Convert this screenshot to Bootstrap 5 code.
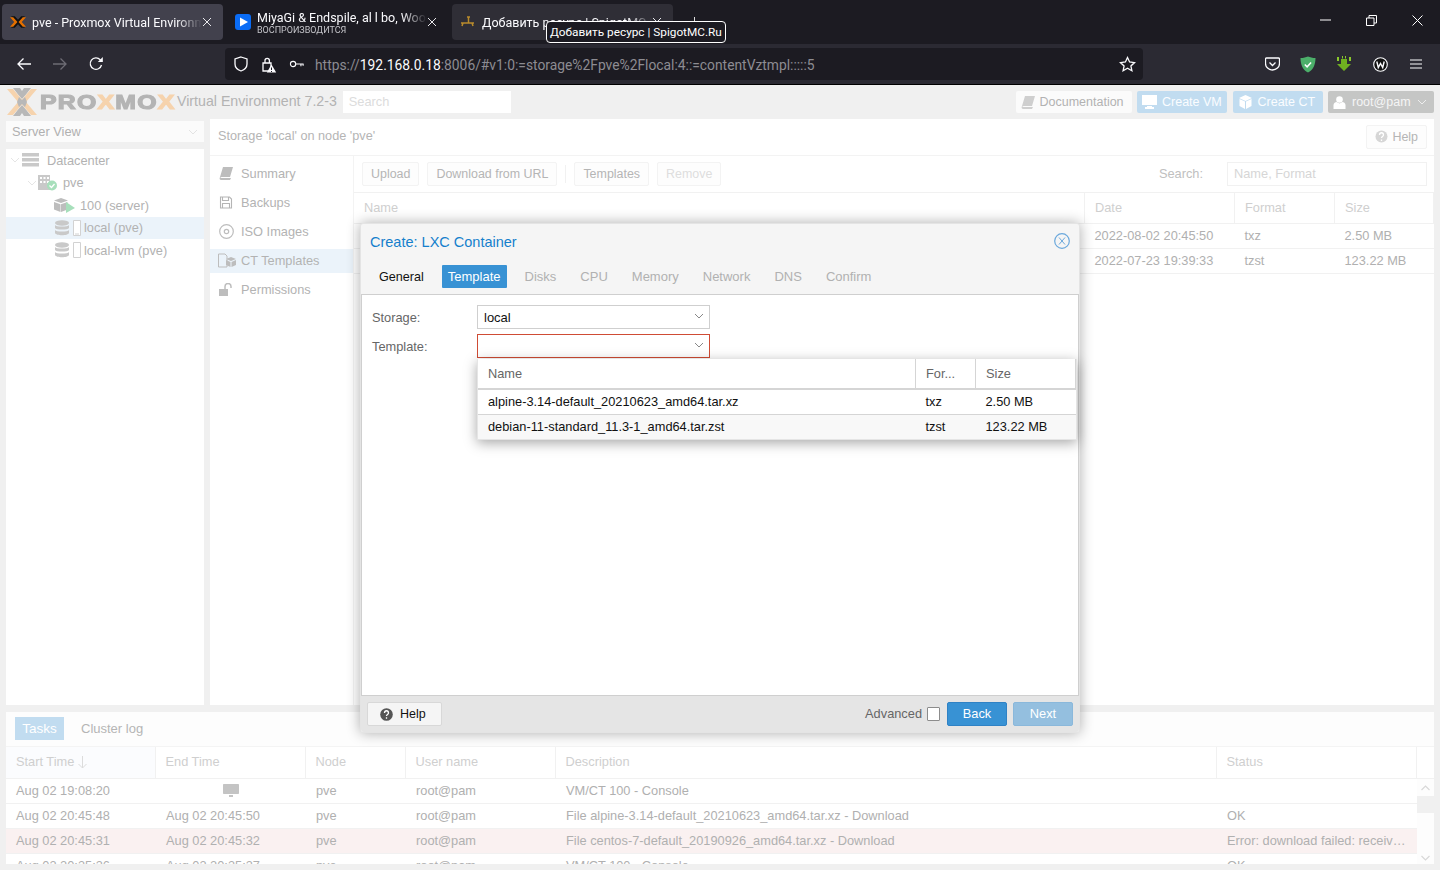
<!DOCTYPE html>
<html lang="en">
<head>
<meta charset="utf-8">
<title>pve - Proxmox Virtual Environment</title>
<link rel="stylesheet" href="https://cdn.jsdelivr.net/npm/bootstrap@5.3.0/dist/css/bootstrap.min.css">
<style>
html,body{height:870px;overflow:hidden}
body{font:12.8px/1.2 "Liberation Sans",Arial,sans-serif;color:#a9a9a9;background:#f0f0f0;position:relative}
svg{display:block;flex:none}
.chrome-ui{font-family:Roboto,"Noto Sans",sans-serif;color:#fbfbfe}
.tabstrip{height:44px;background:#1c1b22;padding:4px 0 4px 2px}
.btab{width:221px;height:36px;border-radius:4px;padding:0 11px 0 8px;font-size:12.5px;white-space:nowrap;flex:none}
.btab.cur{background:#42414d}
.btab.third{background:#2f2e36;margin-left:8px}
.btab.second{padding:0 7px 0 12px}
.ttl{flex:1;min-width:0;overflow:hidden;margin-left:6px;-webkit-mask-image:linear-gradient(90deg,#000 85%,transparent);mask-image:linear-gradient(90deg,#000 85%,transparent)}
.ttl small{display:block;font-size:9px;line-height:10px;color:#c5c5ca}
.ttl span{display:block;line-height:15px}
.winbtns{margin-left:auto}
.winbtn{width:46px;height:32px;display:flex;align-items:center;justify-content:center}
.tipbox{position:absolute;left:546px;top:21px;width:180px;height:22px;background:#1c1b22;border:1px solid #fff;border-radius:4px;font-size:11.8px;color:#fff;line-height:21px;padding-left:3px;white-space:nowrap;z-index:5}
.caretmark{position:absolute;left:694px;top:17px;width:1px;height:5px;background:#ddd}
.toolbar-b{height:41px;background:#2b2a33;border-bottom:1px solid #000;padding:4px 0}
.navrow{height:32px;padding-left:6px}
.navic{width:36px;display:flex;justify-content:center}
.urlbar{width:918px;height:32px;background:#1c1b22;border-radius:4px;margin-left:111px;padding:0 7px 0 8px;font-size:13.83px;color:#8d8c92;white-space:nowrap}
.urlbar span{padding-top:2px}
.urlbar b{font-weight:400;color:#fbfbfe}
.urlgap1{margin-left:11px}
.urlgap2{margin-left:12px;margin-right:10px}
.addons{margin-left:auto;padding-right:6px;height:32px}
.addons>div{width:36px;display:flex;justify-content:center}
.topbar{height:34px;padding:6px 6px 6px 7px;background:#f0f0f0}
.logo-word{font-weight:700;font-size:20px;letter-spacing:1px;color:#b4b4b4;-webkit-text-stroke:1.2px #b4b4b4;margin-left:3px;line-height:1;white-space:nowrap;transform:scaleX(1.24);transform-origin:left center;width:135px}
.logo-word i{font-style:normal;color:#f6d3ad;-webkit-text-stroke:1.2px #f6d3ad}
.verlabel{font-size:14.2px;color:#b3b3b3;margin-left:2px;white-space:nowrap}
.searchtop{width:168px;height:22px;background:#fff;margin-left:6px;color:#dcdcdc;padding:0 6px;line-height:22px}
.pvbtn{height:22px;padding:0 0 0 5px;border:0;border-radius:2px;font-size:12.5px;line-height:22px;display:flex;align-items:center;white-space:nowrap;margin-left:5.500px}
.pvbtn.light{background:#fbfbfb;color:#b2b2b2;width:116px;gap:5px}
.pvbtn.blue{background:#c1dcf0;color:#fbfdff;width:90px;gap:5px}
.pvbtn.grey{background:#c5c6c5;color:#f5f5f5;width:106px;gap:6px}
.workrow{height:586px;gap:6px;padding:0 6px}
.leftcol{width:198px;flex:none;gap:7px;padding-top:2px}
.viewsel{height:21px;background:#fbfbfb;padding:0 6px;color:#b0b0b0}
.treebox{flex:1;background:#fff}
.trow{height:22.5px;white-space:nowrap;color:#b2b2b2}
.trow.on{background:#ebf3fa}
.mainpan{width:1224px;flex:none;background:#fff}
.crumb{height:37px;border-bottom:1px solid #f3f3f3;padding:0 7px 0 8px;color:#b5b5b5;font-size:12.7px}
.sidemenu{width:144px;flex:none;border-right:1px solid #f3f3f3;padding-top:3px}
.mitem{height:29px;padding-left:9px;gap:8px;color:#b3b3b3;white-space:nowrap}
.mitem.gapb{gap:7px}
.mitem.on{background:#ebf3fa;height:24px;margin:2.5px 0;gap:4px;padding-left:8px}
.stbar{height:37px;border-bottom:1px solid #f1f1f1;padding:0 7px 0 8px}
.ghostbtn{height:24px;padding:0 8px;border:1px solid #f3f3f3;border-radius:2px;background:#fdfdfd;color:#b5b5b5;line-height:22px;margin-right:8px;white-space:nowrap;font-size:12.45px}
.ghostbtn.off{color:#dedede}
.vsep{width:1px;height:18px;background:#f1f1f1;margin-right:8px}
.findlabel{margin-left:auto;color:#c0c0c0;margin-right:24px}
.findbox{width:200px;height:24px;border:1px solid #f1f1f1;padding-left:6px;line-height:22px;color:#d6d6d6}
.gridt.table{table-layout:fixed;margin:0;width:100%;--bs-table-bg:transparent;--bs-table-color:inherit;font-size:12.8px}
.gridt.table>:not(caption)>*>*{padding:0 10px;border-bottom:1px solid #f1f1f1;box-shadow:none;white-space:nowrap;overflow:hidden;text-overflow:ellipsis;vertical-align:middle;font-weight:400}
.gridt th{height:30px;color:#cfcfcf;border-right:1px solid #f1f1f1}
.gridt td{height:25px;color:#b0b0b0}
.gridt.table>tbody>tr.bad>td{background:#faf1f1}
.btmpan{height:152px;margin:7px 6px 0;background:#fff;overflow:hidden}
.btmtabs{height:35px;padding:5px 9px 6px;background:#fdfdfd;border-bottom:1px solid #f4f4f4}
.tasktab{height:23px;width:49px;background:#c1dcf0;color:#fff;text-align:center;line-height:24px;font-size:13.5px}
.clog{margin-left:17px;padding-top:1px;color:#b5b5b5;font-size:13px}
.btmhead.gridt.table{width:1428px}
.btmhead.gridt.table>:not(caption)>*>*{height:31px;padding-bottom:2px}
.btmhead th.sorted{background:#fbfcfe}
.taskgrid.gridt.table{width:1411px}
.taskscroll{height:88px;overflow:hidden;position:relative}
.scrollrail{position:absolute;right:0;top:0;bottom:0;width:17px;background:#fdfdfd}
.scrollrail i{position:absolute;left:0;right:0;top:17px;height:17px;background:#f0f0f0}
.scrollrail svg{position:absolute;left:4px}
.scrollrail svg.upa{top:6px}
.scrollrail svg.dna{top:76px}
.wiz{position:absolute;left:360px;top:223px;width:720px;height:510px;background:#f5f5f5;border:1px solid #e4e4e4;border-radius:3px;box-shadow:0 0 14px rgba(0,0,0,.32);z-index:3;display:flex;flex-direction:column}
.wizhead{height:36px;padding:2px 9px 0;color:#157fcc;font-size:14.5px;flex:none}
.wizhead svg{margin-top:-4px}
.wiztabs{height:34px;padding:5px 6px 6px;flex:none;align-items:stretch}
.wtab{padding:0 6px;margin:0 6px;color:#b1b1b1;font-size:13px;line-height:24px;white-space:nowrap;border-radius:1px}
.wtab.k{color:#111;font-size:12.6px}
.wtab.cur{background:#3892d4;color:#fff}
.wizbody{height:402px;flex:none;background:#fff;border:1px solid #cfcfcf;padding:10px;position:relative}
.frow{height:24px;margin-bottom:5px;color:#666}
.frow label{width:105px;flex:none;font-size:12.8px;color:#666;padding-top:1px}
.combo{width:233px;height:24px;border:1px solid #cfcfcf;padding:0 6px;color:#111;font-size:13px;line-height:23px;position:relative}
.combo.bad{border-color:#cf4c35}
.combo svg{position:absolute;right:5px;top:7px}
.pickl{position:absolute;left:115px;top:64px;width:600px;height:81px;background:#fff;box-shadow:0 3px 12px rgba(0,0,0,.35);z-index:4;border:1px solid #e5e5e5;border-top:0}
.pickl .gridt th{color:#666;border-right:1px solid #d5d5d5;font-size:12.8px;border-bottom:2px solid #d5d5d5!important;height:30px}
.pickl .gridt td{color:#111;font-size:12.8px;border-bottom:1px solid #d5d5d5!important}
.pickl .gridt tr.alt td{background:#f8f8f8;border-bottom:0!important}
.wizfoot{flex:1;background:#e5e5e5;padding:0 6px;border-radius:0 0 3px 3px}
.fhelp{width:75px;height:24px;background:#f5f5f5;border:1px solid #d8d8d8;border-radius:2px;color:#111;font-size:12.5px;padding:0 0 0 12px;gap:7px}
.advl{margin-left:auto;color:#666;font-size:12.8px}
.advc{width:13px;height:14px;border:1px solid #8c8c8c;background:#fff;border-radius:1px;margin:0 7px 0 5px}
.fbtn{width:60px;height:24px;border:1px solid #2f82c5;border-radius:2px;background:#3892d4;color:#fff;text-align:center;line-height:22px;font-size:12.8px}
.fbtn.dim{background:#94bfdf;border-color:#8ab8db;margin-left:6px}
.helpup{margin-top:-1px}
.ind21{padding-left:21px}.ind48{padding-left:48px}.ind49{padding-left:49px}
.ml2px{margin-left:2px}.ml3px{margin-left:3px}.ml5px{margin-left:5px}.ml8px{margin-left:8px}
.w150{width:150px}.w149{width:149px}.w100{width:100px}.w99{width:99px}.w661{width:661px}.w200{width:200px}.w18{width:18px}.w60{width:60px}
</style>
</head>
<body>

<div class="chrome-ui">
  <div class="tabstrip d-flex align-items-stretch">
    <div class="btab cur d-flex align-items-center">
      <svg width="16" height="14" viewBox="0 0 30 24"><path d="M2 1h7l6 7 6-7h7L18.500 12 28 23h-7l-6-7-6 7H2l9.500-11z" fill="#111"/><path d="M0 3h6l8 9-8 9H0l8-9zM30 3h-6l-8 9 8 9h6l-8-9z" fill="#e57000"/></svg>
      <div class="ttl"><span>pve - Proxmox Virtual Environment</span></div>
      <svg width="10" height="10" viewBox="0 0 10 10"><path d="M1 1l8 8M9 1l-8 8" stroke="#e8e8ec" stroke-width="1"/></svg>
    </div>
    <div class="btab second d-flex align-items-center">
      <svg width="16" height="16" viewBox="0 0 16 16"><rect width="16" height="16" rx="3" fill="#0a6cf5"/><path d="M5 3.500l8 4.500-8 4.500z" fill="#fff"/></svg>
      <div class="ttl"><span>MiyaGi &amp; Endspile, al l bo, Woosh</span><small>ВОСПРОИЗВОДИТСЯ</small></div>
      <svg width="10" height="10" viewBox="0 0 10 10"><path d="M1 1l8 8M9 1l-8 8" stroke="#e8e8ec" stroke-width="1"/></svg>
    </div>
    <div class="btab third d-flex align-items-center">
      <svg width="16" height="16" viewBox="0 0 16 16"><path d="M1 9h13M7 3h3M8.500 3v6M3 9l-1 3M12 9l1 3" stroke="#b98b2c" stroke-width="1.500" fill="none"/></svg>
      <div class="ttl"><span>Добавить ресурс | SpigotMC.Ru</span></div>
      <svg width="10" height="10" viewBox="0 0 10 10"><path d="M1 1l8 8M9 1l-8 8" stroke="#e8e8ec" stroke-width="1"/></svg>
    </div>
    <div class="winbtns d-flex">
      <div class="winbtn"><svg width="11" height="2" viewBox="0 0 11 2"><path d="M0 1h11" stroke="#fff"/></svg></div>
      <div class="winbtn"><svg width="11" height="11" viewBox="0 0 11 11"><path d="M.5 3h7.500v7.500H.5zM3 3V.5h7.500V8H8" fill="none" stroke="#fff"/></svg></div>
      <div class="winbtn"><svg width="11" height="11" viewBox="0 0 11 11"><path d="M.5.500l10 10M10.500.500l-10 10" stroke="#fff"/></svg></div>
    </div>
  </div>
  <div class="caretmark"></div>
  <div class="tipbox">Добавить ресурс | SpigotMC.Ru</div>
  <div class="toolbar-b d-flex align-items-start">
    <div class="d-flex align-items-center navrow">
      <div class="navic"><svg width="16" height="16" viewBox="0 0 16 16"><path d="M15 8H2M7.500 2.500L2 8l5.500 5.500" fill="none" stroke="#fbfbfe" stroke-width="1.300"/></svg></div>
      <div class="navic"><svg width="16" height="16" viewBox="0 0 16 16"><path d="M1 8h13M8.500 2.500L14 8l-5.500 5.500" fill="none" stroke="#6d6c74" stroke-width="1.300"/></svg></div>
      <div class="navic"><svg width="16" height="16" viewBox="0 0 16 16"><path d="M13.500 9a5.700 5.700 0 1 1-1.300-5.200L14 5.500" fill="none" stroke="#fbfbfe" stroke-width="1.300"/><path d="M14.800 1v5h-5z" fill="#fbfbfe"/></svg></div>
    </div>
    <div class="urlbar d-flex align-items-center">
      <svg width="16" height="16" viewBox="0 0 16 16"><path d="M8 1l6 2v5c0 3.500-2.500 5.800-6 7-3.500-1.200-6-3.500-6-7V3z" fill="none" stroke="#fbfbfe" stroke-width="1.300"/></svg>
      <svg class="urlgap1" width="17" height="17" viewBox="0 0 17 17"><path d="M3 7h8v8H3zM5 7V4.500a2.200 2.200 0 0 1 4.400 0V7" fill="none" stroke="#fbfbfe" stroke-width="1.300"/><path d="M11.500 8.500l4.700 8h-9.400z" fill="#fbfbfe"/><path d="M11.500 11.500v2.500M11.500 15v1" stroke="#1c1b22"/></svg>
      <svg class="urlgap2" width="16" height="14" viewBox="0 0 17 16"><circle cx="4" cy="8" r="3" fill="none" stroke="#fbfbfe" stroke-width="1.300"/><path d="M7 8h9M13 8v2.500M15.500 8v2" stroke="#fbfbfe" stroke-width="1.300"/></svg>
      <span>https://<b>192.168.0.18</b>:8006/#v1:0:=storage%2Fpve%2Flocal:4::=contentVztmpl:::::5</span>
      <svg class="ms-auto" width="17" height="17" viewBox="0 0 17 17"><path d="M8.500 1.500l2.100 4.500 4.900.6-3.600 3.300 1 4.800-4.400-2.500-4.400 2.500 1-4.800L1.500 6.600l4.900-.6z" fill="none" stroke="#fbfbfe" stroke-width="1.300"/></svg>
    </div>
    <div class="addons d-flex align-items-center">
      <div><svg width="15" height="14" viewBox="0 0 15 14"><path d="M1.500 1h12c.5 0 1 .4 1 1v4.500c0 3.600-3.200 6.500-7 6.500s-7-2.900-7-6.500V2c0-.6.500-1 1-1z" fill="none" stroke="#fbfbfe" stroke-width="1.300"/><path d="M4.500 5.500l3 3 3-3" fill="none" stroke="#fbfbfe" stroke-width="1.300"/></svg></div>
      <div><svg width="16" height="17" viewBox="0 0 16 17"><path d="M8 .500c2 .8 4.500 1.500 7.500 1.500 0 7-2.500 12-7.500 14.500C3 14 .5 9 .5 2 3.500 2 6 1.300 8 .500z" fill="#4caf6a"/><path d="M4.800 8.500l2.300 2.300 4-4.300" fill="none" stroke="#fff" stroke-width="1.500"/></svg></div>
      <div><svg width="16" height="16" viewBox="0 0 16 16"><path d="M5 3h6v5h4l-7 7-7-7h4z" fill="#70b020"/><path d="M6 0h1v2.500H6zM9 0h1v2.500H9zM1 1h2v4H1zM13 1h2v4h-2z" fill="#8ac82c"/></svg></div>
      <div><svg width="15" height="15" viewBox="0 0 15 15"><circle cx="7.500" cy="7.500" r="6.800" fill="#111" stroke="#fbfbfe" stroke-width="1.100"/><path d="M3.800 4.500l1.500 6 2.200-4 2.200 4 1.500-6" fill="none" stroke="#fbfbfe" stroke-width="1.400"/></svg></div>
      <div><svg width="12" height="10" viewBox="0 0 12 10"><path d="M0 1h12M0 5h12M0 9h12" stroke="#fbfbfe" stroke-width="1.200"/></svg></div>
    </div>
  </div>
</div>

<div class="topbar d-flex align-items-center">
  <svg width="30" height="28" viewBox="0 0 30 28"><path d="M6 0h7l2 3 2-3h7l-5.500 7L15 11l-3.500-4zM6 28h7l2-3 2 3h7l-5.500-7L15 17l-3.500 4z" fill="#b8b8b8"/><path d="M0 1h6l11 13L6 27H0l11-13zM30 1h-6L13 14l11 13h6L19 14z" fill="#f6d3ad"/><path d="M12 9l3 3 3-3 2 5-2 5-3-3-3 3-2-5z" fill="#b8b8b8"/></svg>
  <div class="logo-word">PRO<i>X</i>MO<i>X</i></div>
  <div class="verlabel">Virtual Environment 7.2-3</div>
  <div class="searchtop">Search</div>
  <div class="ms-auto d-flex">
    <div class="pvbtn light"><svg width="14" height="13" viewBox="0 0 14 13"><path d="M4 0h10l-3 10H1zM1 10c-1 2 0 3 1 3h9l1-2H2.500" fill="#cfcfcf"/></svg>Documentation</div>
    <div class="pvbtn blue"><svg width="15" height="14" viewBox="0 0 15 14"><path d="M0 0h15v10H0zM5 11h5v1h2v2H3v-2h2z" fill="#fff"/></svg>Create VM</div>
    <div class="pvbtn blue"><svg width="15" height="14" viewBox="0 0 14 14"><path d="M7 0l6.500 3L7 6 .5 3zM1 4l5.500 2.500V14L1 11zM13 4v7l-5.500 3V6.500z" fill="#fff"/></svg>Create CT</div>
    <div class="pvbtn grey"><svg width="13" height="13" viewBox="0 0 12 13"><circle cx="6" cy="3.500" r="3.300" fill="#fff"/><path d="M0 13V9c0-2 2-3 3-3l3 1.500L9 6c1 0 3 1 3 3v4z" fill="#fff"/></svg>root@pam<svg width="10" height="6" viewBox="0 0 10 6"><path d="M1 1l4 4 4-4" fill="none" stroke="#eee"/></svg></div>
  </div>
</div>

<div class="workrow d-flex">
  <div class="leftcol d-flex flex-column">
    <div class="viewsel d-flex align-items-center justify-content-between">Server View<svg width="10" height="6" viewBox="0 0 10 6"><path d="M1 1l4 4 4-4" fill="none" stroke="#e3e3e3"/></svg></div>
    <div class="treebox">
      <div class="trow d-flex align-items-center ps-1">
        <svg width="10" height="6" viewBox="0 0 10 6"><path d="M1 1l4 4 4-4" fill="none" stroke="#e5e5e5"/></svg>
        <svg class="ml2px" width="17" height="14" viewBox="0 0 17 14"><path d="M0 0h17v3.500H0zM0 5h17v3.500H0zM0 10h17v3.500H0z" fill="#c9c9c9"/></svg>
        <span class="ml8px">Datacenter</span>
      </div>
      <div class="trow d-flex align-items-center ind21">
        <svg width="10" height="6" viewBox="0 0 10 6"><path d="M1 1l4 4 4-4" fill="none" stroke="#e5e5e5"/></svg>
        <svg width="21" height="17" viewBox="0 0 21 17"><path d="M1 1h12v15H1z" fill="#c9c9c9"/><path d="M3 3h2v2H3zM6.500 3h2v2h-2zM10 3h2v2h-2zM3 7h2v2H3zM6.500 7h2v2h-2zM10 7h2v2h-2z" fill="#fff"/><circle cx="15" cy="11.500" r="5" fill="#a7dfbb"/><path d="M12.500 11.500l2 2 3-3.500" fill="none" stroke="#fff" stroke-width="1.300"/></svg>
        <span class="ml5px">pve</span>
      </div>
      <div class="trow d-flex align-items-center ind48">
        <svg width="21" height="16" viewBox="0 0 21 16"><path d="M7 1l7 2.500L7 6 0 3.500zM0 5l6.500 2.300V15L0 12.500zM13.500 5v7.500L7 15V7.300z" fill="#bdbdbd"/><path d="M12 5l9 6-9 5z" fill="#a7dfbb"/></svg>
        <span class="ml5px">100 (server)</span>
      </div>
      <div class="trow on d-flex align-items-center ind49">
        <svg width="14" height="16" viewBox="0 0 14 16"><ellipse cx="7" cy="3" rx="7" ry="2.700" fill="#c9c9c9"/><path d="M0 5c1 2 13 2 14 0v3c-1 2-13 2-14 0zM0 10c1 2 13 2 14 0v3c-1 3-13 3-14 0z" fill="#c9c9c9"/></svg>
        <svg class="ms-1" width="8" height="16" viewBox="0 0 8 16"><path d="M.5.500h7v15h-7z" fill="#fff" stroke="#d2d2d2"/><path d="M2 14h4" stroke="#d2d2d2"/></svg>
        <span class="ml3px">local (pve)</span>
      </div>
      <div class="trow d-flex align-items-center ind49">
        <svg width="14" height="16" viewBox="0 0 14 16"><ellipse cx="7" cy="3" rx="7" ry="2.700" fill="#c9c9c9"/><path d="M0 5c1 2 13 2 14 0v3c-1 2-13 2-14 0zM0 10c1 2 13 2 14 0v3c-1 3-13 3-14 0z" fill="#c9c9c9"/></svg>
        <svg class="ms-1" width="8" height="16" viewBox="0 0 8 16"><path d="M.5.500h7v15h-7z" fill="#fff" stroke="#d2d2d2"/></svg>
        <span class="ml3px">local-lvm (pve)</span>
      </div>
    </div>
  </div>

  <div class="mainpan d-flex flex-column">
    <div class="crumb d-flex align-items-center">Storage 'local' on node 'pve'
      <div class="ghostbtn helpup ms-auto me-0 d-flex align-items-center gap-1"><svg width="13" height="13" viewBox="0 0 13 13"><circle cx="6.500" cy="6.500" r="6" fill="#d6d6d6"/><path d="M4.500 5c0-3 4-3 4 0 0 1.500-2 1.500-2 3M6.500 9.500v1.500" fill="none" stroke="#fff" stroke-width="1.300"/></svg>Help</div>
    </div>
    <div class="d-flex flex-fill">
      <div class="sidemenu">
        <div class="mitem d-flex align-items-center"><svg width="14" height="13" viewBox="0 0 14 13"><path d="M4 0h10l-3 10H1zM1 10c-1 2 0 3 1 3h9l1-2H2.500" fill="#bdbdbd"/></svg>Summary</div>
        <div class="mitem d-flex align-items-center"><svg width="14" height="13" viewBox="0 0 13 13"><path d="M1 1h9l2 2v9H1zM3 1.500v3h6v-3M3 12V7.500h7V12" fill="none" stroke="#b5b5b5" stroke-width="1.100"/></svg>Backups</div>
        <div class="mitem gapb d-flex align-items-center"><svg width="15" height="15" viewBox="0 0 15 15"><circle cx="7.500" cy="7.500" r="6.800" fill="none" stroke="#bdbdbd" stroke-width="1.200"/><circle cx="7.500" cy="7.500" r="2.200" fill="none" stroke="#bdbdbd" stroke-width="1.200"/></svg>ISO Images</div>
        <div class="mitem on d-flex align-items-center"><svg width="19" height="15" viewBox="0 0 19 15"><path d="M.5 1H7l2 2v11H.5z" fill="none" stroke="#bdbdbd"/><path d="M13 4l5 2-5 2-5-2zM8 7l4.500 2v5L8 12zM18 7v5l-4.500 2V9z" fill="#bdbdbd"/></svg><span>CT Templates</span></div>
        <div class="mitem d-flex align-items-center"><svg width="14" height="13" viewBox="0 0 14 13"><path d="M0 6h9v7H0z" fill="#bdbdbd"/><path d="M6 6V3.500a3 3 0 0 1 6 0V5" fill="none" stroke="#bdbdbd" stroke-width="1.500"/></svg>Permissions</div>
      </div>
      <div class="flex-fill">
        <div class="stbar d-flex align-items-center">
          <div class="ghostbtn">Upload</div>
          <div class="ghostbtn">Download from URL</div>
          <div class="vsep"></div>
          <div class="ghostbtn">Templates</div>
          <div class="ghostbtn off">Remove</div>
          <div class="findlabel">Search:</div>
          <div class="findbox">Name, Format</div>
        </div>
        <table class="table gridt">
          <colgroup><col><col class="w150"><col class="w100"><col class="w99"></colgroup>
          <thead><tr><th>Name</th><th>Date</th><th>Format</th><th>Size</th></tr></thead>
          <tbody>
            <tr><td></td><td>2022-08-02 20:45:50</td><td>txz</td><td>2.50 MB</td></tr>
            <tr><td></td><td>2022-07-23 19:39:33</td><td>tzst</td><td>123.22 MB</td></tr>
          </tbody>
        </table>
      </div>
    </div>
  </div>
</div>

<div class="btmpan">
  <div class="btmtabs d-flex align-items-center"><div class="tasktab">Tasks</div><div class="clog">Cluster log</div></div>
  <table class="table gridt btmhead">
    <colgroup><col class="w149"><col class="w150"><col class="w100"><col class="w150"><col class="w661"><col class="w200"><col class="w18"></colgroup>
    <thead><tr><th class="sorted">Start Time <svg class="d-inline-block" width="9" height="13" viewBox="0 0 9 13"><path d="M4.500 0v12M.5 8l4 4 4-4" fill="none" stroke="#dcdcdc"/></svg></th><th>End Time</th><th>Node</th><th>User name</th><th>Description</th><th>Status</th><th></th></tr></thead>
  </table>
  <div class="taskscroll">
    <table class="table gridt taskgrid">
      <colgroup><col class="w150"><col class="w150"><col class="w100"><col class="w150"><col class="w661"><col class="w200"></colgroup>
      <tbody>
        <tr><td>Aug 02 19:08:20</td><td><svg class="mx-auto" width="16" height="14" viewBox="0 0 16 14"><path d="M1 0h14c.6 0 1 .4 1 1v8c0 .6-.4 1-1 1H1c-.6 0-1-.4-1-1V1c0-.6.4-1 1-1zM6 11h4v2H6z" fill="#c4c4c4"/></svg></td><td>pve</td><td>root@pam</td><td>VM/CT 100 - Console</td><td></td></tr>
        <tr><td>Aug 02 20:45:48</td><td>Aug 02 20:45:50</td><td>pve</td><td>root@pam</td><td>File alpine-3.14-default_20210623_amd64.tar.xz - Download</td><td>OK</td></tr>
        <tr class="bad"><td>Aug 02 20:45:31</td><td>Aug 02 20:45:32</td><td>pve</td><td>root@pam</td><td>File centos-7-default_20190926_amd64.tar.xz - Download</td><td>Error: download failed: received bad status</td></tr>
        <tr><td>Aug 02 20:35:36</td><td>Aug 02 20:35:37</td><td>pve</td><td>root@pam</td><td>VM/CT 100 - Console</td><td>OK</td></tr>
      </tbody>
    </table>
    <div class="scrollrail"><svg class="upa" width="9" height="6" viewBox="0 0 9 6"><path d="M.5 5l4-4 4 4" fill="none" stroke="#d8d8d8" stroke-width="1.200"/></svg><i></i><svg class="dna" width="9" height="6" viewBox="0 0 9 6"><path d="M.5 1l4 4 4-4" fill="none" stroke="#d8d8d8" stroke-width="1.200"/></svg></div>
  </div>
</div>

<div class="wiz">
  <div class="wizhead d-flex align-items-center">Create: LXC Container
    <svg class="ms-auto" width="16" height="16" viewBox="0 0 16 16"><circle cx="8" cy="8" r="7.300" fill="none" stroke="#6aa8dc" stroke-width="1.200"/><path d="M5 4.500l6 7M11 4.500l-6 7" stroke="#6aa8dc"/></svg>
  </div>
  <div class="wiztabs d-flex">
    <div class="wtab k">General</div><div class="wtab cur">Template</div><div class="wtab">Disks</div><div class="wtab">CPU</div><div class="wtab">Memory</div><div class="wtab">Network</div><div class="wtab">DNS</div><div class="wtab">Confirm</div>
  </div>
  <div class="wizbody">
    <div class="frow d-flex align-items-center"><label>Storage:</label><div class="combo">local<svg width="10" height="6" viewBox="0 0 10 6"><path d="M1 1l4 4 4-4" fill="none" stroke="#888"/></svg></div></div>
    <div class="frow d-flex align-items-center"><label>Template:</label><div class="combo bad"><svg width="10" height="6" viewBox="0 0 10 6"><path d="M1 1l4 4 4-4" fill="none" stroke="#888"/></svg></div></div>
    <div class="pickl">
      <table class="table gridt">
        <colgroup><col><col class="w60"><col class="w100"></colgroup>
        <thead><tr><th>Name</th><th>For...</th><th>Size</th></tr></thead>
        <tbody>
          <tr><td>alpine-3.14-default_20210623_amd64.tar.xz</td><td>txz</td><td>2.50 MB</td></tr>
          <tr class="alt"><td>debian-11-standard_11.3-1_amd64.tar.zst</td><td>tzst</td><td>123.22 MB</td></tr>
        </tbody>
      </table>
    </div>
  </div>
  <div class="wizfoot d-flex align-items-center">
    <div class="fhelp d-flex align-items-center"><svg width="13" height="13" viewBox="0 0 13 13"><circle cx="6.500" cy="6.500" r="6.300" fill="#555"/><path d="M4.500 5c0-3 4-3 4 0 0 1.500-2 1.500-2 3M6.500 9.300v1.500" fill="none" stroke="#fff" stroke-width="1.300"/></svg>Help</div>
    <div class="advl">Advanced</div><div class="advc"></div>
    <div class="fbtn">Back</div><div class="fbtn dim">Next</div>
  </div>
</div>

</body>
</html>
